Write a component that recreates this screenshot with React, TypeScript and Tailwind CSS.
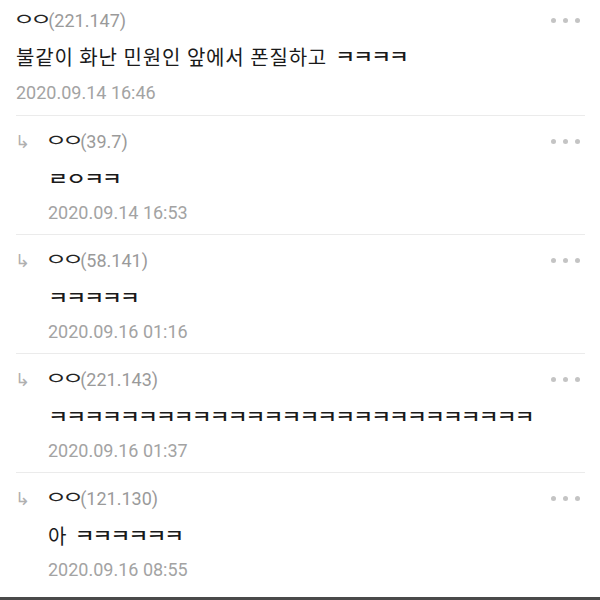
import React from 'react';

interface Reply {
  ip: string;
  text?: string;
  jamo: string;
  date: string;
}

const replies: Reply[] = [
  { ip: '39.7', jamo: 'ㄹㅇㅋㅋ', date: '2020.09.14 16:53' },
  { ip: '58.141', jamo: 'ㅋㅋㅋㅋㅋ', date: '2020.09.16 01:16' },
  { ip: '221.143', jamo: 'ㅋㅋㅋㅋㅋㅋㅋㅋㅋㅋㅋㅋㅋㅋㅋㅋㅋㅋㅋㅋㅋㅋㅋㅋㅋㅋㅋ', date: '2020.09.16 01:37' },
  { ip: '121.130', text: '아', jamo: 'ㅋㅋㅋㅋㅋㅋ', date: '2020.09.16 08:55' },
];

const font = { fontFamily: "Roboto, 'Noto Sans CJK KR', sans-serif" };

const MoreDots = () => (
  <div className="flex gap-[7px] pr-[20px]">
    <span className="w-[5px] h-[5px] rounded-full bg-[#c4c4c4]"></span>
    <span className="w-[5px] h-[5px] rounded-full bg-[#c4c4c4]"></span>
    <span className="w-[5px] h-[5px] rounded-full bg-[#c4c4c4]"></span>
  </div>
);

const Jamo = ({ children }: { children: string }) => (
  <span className="inline-block text-[22px] leading-none tracking-[-2.3px] scale-y-[0.78] text-[#1a1a1a] font-medium">
    {children}
  </span>
);

const Name = ({ ip }: { ip: string }) => (
  <span className="flex items-center">
    <span className="inline-block -ml-[3px] text-[24px] leading-none tracking-[-5px] scale-y-[0.68] text-[#222]">ㅇㅇ</span>
    <span className="text-[18px] text-[#9a9a9a] ml-[1px]">({ip})</span>
  </span>
);

export default function App() {
  return (
    <div className="w-[600px] h-[600px] bg-white overflow-hidden flex flex-col" style={font}>
      {/* Top comment */}
      <div className="pl-[16px] pt-[6px] pb-[11px]">
        <div className="h-[28px] flex items-center justify-between">
          <Name ip="221.147" />
          <MoreDots />
        </div>
        <div className="h-[28px] mt-[10px] flex items-center text-[20px] text-[#1a1a1a]">
          <span className="tracking-[0.8px]">불같이 화난 민원인 앞에서 폰질하고</span>
          <span className="ml-[8px] flex items-center"><Jamo>ㅋㅋㅋㅋ</Jamo></span>
        </div>
        <div className="h-[24px] mt-[8px] flex items-center text-[18px] text-[#a3a3a3]">
          2020.09.14 16:46
        </div>
      </div>
      <div className="h-px bg-[#ebebeb] ml-[16px] mr-[15px]"></div>

      {/* Replies */}
      {replies.map((r, i) => (
        <div key={i}>
          <div className="flex pt-[11px] pb-[10px]">
            <div className="w-[48px] pl-[15px] h-[28px] flex items-center text-[18px] text-[#b0b0b0]">↳</div>
            <div className="flex-1">
              <div className="h-[28px] flex items-center justify-between">
                <Name ip={r.ip} />
                <MoreDots />
              </div>
              <div className="h-[28px] mt-[11px] flex items-center text-[20px] text-[#1a1a1a] whitespace-nowrap">
                {r.text && <span className="mr-[8px]">{r.text}</span>}
                <Jamo>{r.jamo}</Jamo>
              </div>
              <div className="h-[24px] mt-[6px] flex items-center text-[18px] text-[#a3a3a3]">
                {r.date}
              </div>
            </div>
          </div>
          {i < replies.length - 1 && <div className="h-px bg-[#ebebeb] ml-[16px] mr-[15px]"></div>}
        </div>
      ))}
      <div className="flex-1"></div>
      <div className="h-[3px] bg-[#4a4a4a]"></div>
    </div>
  );
}
